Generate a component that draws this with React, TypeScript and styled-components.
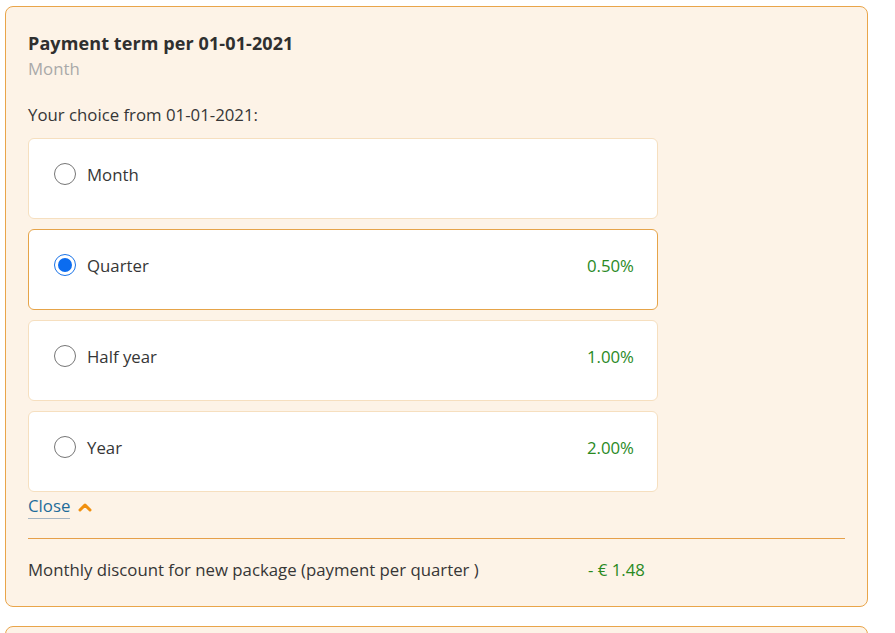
import React, { useState } from 'react'
import styled, { createGlobalStyle } from 'styled-components'

const GlobalStyle = createGlobalStyle`
  body {
    margin: 0;
    background: #ffffff;
    font-family: 'Open Sans', 'Liberation Sans', sans-serif;
    color: #363636;
  }
`

const options = [
  { id: 'month', label: 'Month', discount: '' },
  { id: 'quarter', label: 'Quarter', discount: '0.50%' },
  { id: 'half', label: 'Half year', discount: '1.00%' },
  { id: 'year', label: 'Year', discount: '2.00%' },
]

const App = () => {
  const [choice, setChoice] = useState('quarter')

  return (
    <Page>
      <GlobalStyle />
      <Card>
        <Title>Payment term per 01-01-2021</Title>
        <Current>Month</Current>
        <Label>Your choice from 01-01-2021:</Label>
        <OptionList>
          {options.map((o) => (
            <Option
              key={o.id}
              $active={choice === o.id}
              onClick={() => setChoice(o.id)}
            >
              <Radio $checked={choice === o.id} />
              <OptionLabel>{o.label}</OptionLabel>
              <Discount>{o.discount}</Discount>
            </Option>
          ))}
        </OptionList>
        <CloseLink>
          <span>Close</span>
          <svg width="14" height="10" viewBox="0 0 14 10">
            <path
              d="M2 8 L7 3 L12 8"
              fill="none"
              stroke="#f0900f"
              strokeWidth="3"
              strokeLinecap="round"
              strokeLinejoin="round"
            />
          </svg>
        </CloseLink>
        <Divider />
        <Summary>
          <SummaryText>
            Monthly discount for new package (payment per quarter )
          </SummaryText>
          <SummaryValue>- € 1.48</SummaryValue>
        </Summary>
      </Card>
      <NextCard />
    </Page>
  )
}

const Page = styled.div`
  display: flex;
  flex-direction: column;
  gap: 19px;
  padding: 6px 27px 0 5px;
  height: 633px;
  box-sizing: border-box;
  overflow: hidden;
`
const Card = styled.div`
  background: #fdf3e7;
  border: 1px solid #e9a54a;
  border-radius: 8px;
  padding: 24px 22px 24px 22px;
  flex-shrink: 0;
`
const NextCard = styled(Card)`
  height: 40px;
  padding: 0;
`
const Title = styled.div`
  font-size: 18px;
  font-weight: 700;
  color: #2f2f2f;
  line-height: 24px;
  letter-spacing: 0.1px;
`
const Current = styled.div`
  font-size: 16.8px;
  color: #a9a9a9;
  line-height: 28px;
`
const Label = styled.div`
  font-size: 16.8px;
  line-height: 24px;
  margin-top: 20px;
  margin-bottom: 11px;
`
const OptionList = styled.div`
  display: flex;
  flex-direction: column;
  gap: 10px;
  width: 630px;
`
const Option = styled.div<{ $active: boolean }>`
  display: flex;
  align-items: center;
  height: 81px;
  box-sizing: border-box;
  padding: 0 23px 9px 25px;
  background: #ffffff;
  border: 1px solid ${(p) => (p.$active ? '#e6a449' : '#f6dfbf')};
  border-radius: 6px;
  cursor: pointer;
`
const Radio = styled.span<{ $checked: boolean }>`
  width: 22px;
  height: 22px;
  box-sizing: border-box;
  border-radius: 50%;
  border: 1px solid ${(p) => (p.$checked ? '#1a73e8' : '#767676')};
  background: #ffffff;
  position: relative;
  flex-shrink: 0;
  &::after {
    content: '';
    display: ${(p) => (p.$checked ? 'block' : 'none')};
    position: absolute;
    inset: 3px;
    border-radius: 50%;
    background: #0b6cf0;
  }
`
const OptionLabel = styled.span`
  margin-left: 11px;
  font-size: 16.8px;
  color: #363636;
  flex: 1;
`
const Discount = styled.span`
  font-size: 16.8px;
  color: #2a8a1f;
`
const CloseLink = styled.div`
  display: flex;
  align-items: center;
  gap: 8px;
  margin-top: 2px;
  font-size: 16.8px;
  color: #1e6c9a;
  span {
    border-bottom: 1px solid #a8b6c2;
    line-height: 24px;
  }
`
const Divider = styled.hr`
  border: none;
  border-top: 1px solid #e6a04a;
  margin: 19px 0 0 0;
`
const Summary = styled.div`
  display: flex;
  align-items: center;
  margin-top: 19px;
  font-size: 16.8px;
  line-height: 24px;
`
const SummaryText = styled.span`
  width: 560px;
  color: #363636;
`
const SummaryValue = styled.span`
  color: #2a8a1f;
`

export default App
